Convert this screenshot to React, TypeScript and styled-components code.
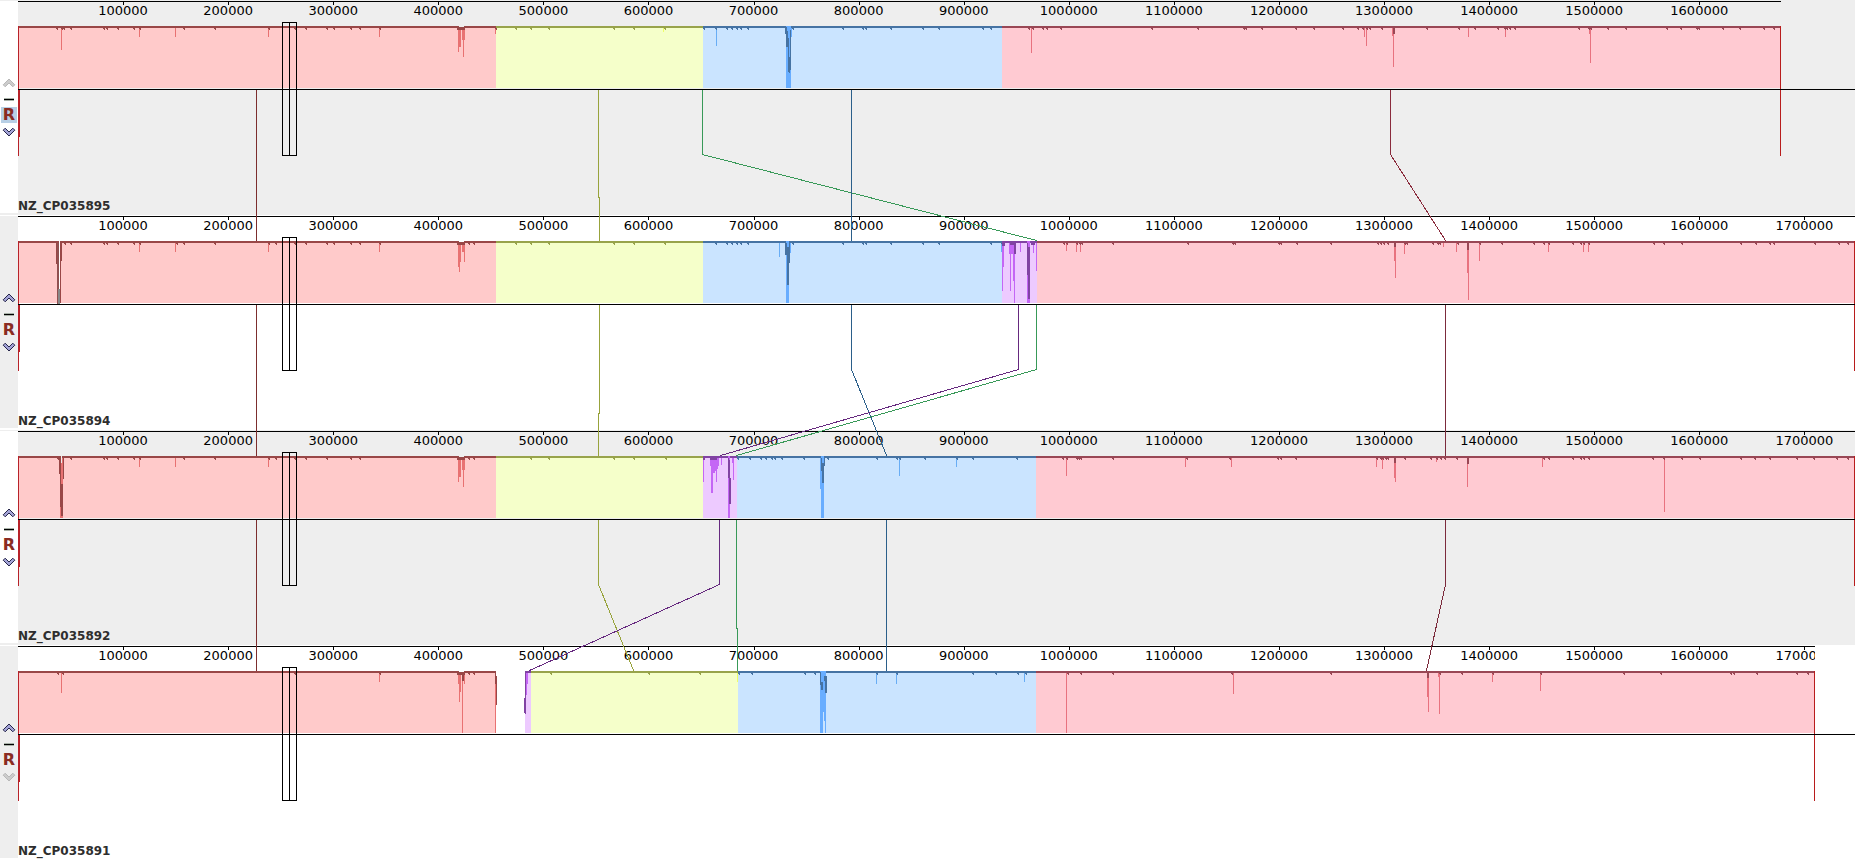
import React from 'react';
import styled, { createGlobalStyle } from 'styled-components';

const GlobalStyle = createGlobalStyle`
  body {
    margin: 0;
    background: #ffffff;
    font-family: "DejaVu Sans", Verdana, sans-serif;
  }
`;

const GUTTER = 18;
const SPAN = 1837;
const GENOME_SPAN = 1748200;
const ROW = 215;
const RULER = 22;
const CHART = 177;

type Hue = 'red' | 'yellow' | 'blue' | 'pink' | 'purple';

const hues: Record<Hue, { fill: string; line: string; low: string }> = {
  red: { fill: '#ffcaca', line: '#994747', low: '#e87272' },
  yellow: { fill: '#f5ffca', line: '#98a34b', low: '#eeff66' },
  blue: { fill: '#cae4ff', line: '#4673a3', low: '#68adf5' },
  pink: { fill: '#ffcad2', line: '#994755', low: '#e8727f' },
  purple: { fill: '#edcaff', line: '#8143a3', low: '#c466f5' },
};

/* [x, width, top, bottom, tone] */
type Bar = [number, number, number, number, string];

interface Genome {
  name: string;
  shaded: boolean;
  end: number;
  blocks: [Hue, number, number][];
  nicks: number[];
  spikes: [number, number, number?][];
  bars: Bar[];
}

const genomes: Genome[] = [
  {
    name: 'NZ_CP035895',
    shaded: true,
    end: 1781,
    blocks: [['red', 18, 496], ['yellow', 496, 703], ['blue', 703, 1002], ['pink', 1002, 1781]],
    nicks: [
      56, 61, 63, 70, 103, 106, 117, 133, 139, 183, 214, 268, 294, 305, 326, 333, 350, 359, 379, 495, 515, 530, 548,
      613, 633, 664, 703, 715, 726, 731, 736, 740, 747, 792, 842, 862, 865, 890, 922, 938, 982, 990, 1028, 1032, 1042,
      1046, 1060, 1151, 1197, 1243, 1245, 1261, 1295, 1313, 1342, 1357, 1362, 1366, 1369, 1381, 1426, 1458, 1474, 1497,
      1504, 1506, 1509, 1514, 1578, 1588, 1590, 1607, 1625, 1666, 1680, 1696, 1698, 1722, 1739, 1763, 1773,
    ],
    spikes: [
      [61, 50], [139, 37], [175, 37], [268, 37], [379, 37], [458, 52], [459, 47, 2], [462, 40, 3], [463, 57], [495, 34],
      [663, 32], [716, 46], [1031, 53], [1364, 37], [1366, 46], [1392, 36], [1393, 67], [1468, 37], [1505, 37],
      [1589, 34], [1590, 63],
    ],
    bars: [
      [457, 8, 28, 30, '#994747'], [459, 5, 26, 27, '#eeeeee'], [1393, 2, 28, 34, '#994755'],
      [786, 5, 26, 88, '#68adff'], [791, 1, 28, 37, '#68adff'], [785, 2, 27, 34, '#4673a3'], [786, 2, 31, 47, '#4673a3'],
      [788, 1, 38, 72, '#4673a3'], [789, 1, 57, 73, '#4673a3'], [790, 1, 30, 70, '#4673a3'],
    ],
  },
  {
    name: 'NZ_CP035894',
    shaded: false,
    end: 1855,
    blocks: [['red', 18, 496], ['yellow', 496, 703], ['blue', 703, 1002], ['purple', 1002, 1037], ['pink', 1037, 1855]],
    nicks: [
      64, 70, 103, 106, 117, 133, 139, 176, 183, 214, 268, 275, 294, 305, 326, 333, 350, 359, 379, 468, 473, 515, 530,
      548, 613, 633, 664, 715, 726, 731, 736, 740, 747, 792, 842, 862, 865, 890, 922, 938, 990, 1001, 1063, 1066, 1076,
      1079, 1081, 1112, 1187, 1232, 1234, 1278, 1280, 1296, 1330, 1377, 1380, 1383, 1387, 1404, 1406, 1432, 1437, 1439,
      1457, 1479, 1501, 1533, 1543, 1548, 1572, 1580, 1583, 1588, 1653, 1663, 1681, 1740, 1755, 1769, 1773, 1814, 1838,
      1847,
    ],
    spikes: [
      [139, 37], [175, 37], [268, 37], [379, 37], [458, 52], [459, 57], [460, 47], [462, 37, 2], [464, 47], [779, 42],
      [1001, 37], [1002, 76], [1003, 52], [1009, 39, 4], [1010, 76], [1013, 66], [1014, 88], [1020, 37], [1033, 38],
      [1036, 56], [1066, 36], [1076, 37], [1080, 37], [1394, 46], [1395, 63], [1404, 39], [1443, 32], [1456, 37],
      [1467, 58], [1468, 85], [1479, 46], [1548, 37], [1583, 37], [1588, 37],
    ],
    bars: [
      [457, 8, 28, 30, '#994747'], [459, 5, 26, 27, '#ffffff'],
      [56, 1, 28, 49, '#994747'], [57, 2, 28, 89, '#8f5050'], [59, 1, 26, 74, '#ffffff'], [58, 2, 74, 89, '#888888'],
      [60, 1, 27, 88, '#994747'], [61, 1, 28, 46, '#994747'],
      [786, 3, 26, 88, '#68adff'], [785, 2, 28, 40, '#4673a3'], [787, 2, 32, 70, '#4673a3'], [789, 1, 28, 48, '#4673a3'],
      [790, 1, 28, 38, '#68adff'],
      [1002, 3, 27, 31, '#8143a3'], [1010, 5, 28, 30, '#8143a3'], [1014, 2, 28, 39, '#8143a3'],
      [1027, 3, 26, 88, '#c466f5'], [1027, 1, 28, 60, '#8143a3'], [1028, 2, 32, 84, '#8143a3'], [1031, 4, 28, 30, '#8143a3'],
      [1394, 2, 28, 32, '#994755'], [1467, 2, 28, 35, '#994755'],
    ],
  },
  {
    name: 'NZ_CP035892',
    shaded: true,
    end: 1855,
    blocks: [['red', 18, 496], ['yellow', 496, 703], ['purple', 703, 737], ['blue', 737, 1036], ['pink', 1036, 1855]],
    nicks: [
      57, 70, 103, 106, 117, 133, 139, 183, 214, 268, 275, 294, 305, 326, 350, 359, 468, 473, 530, 548, 613, 633, 665,
      737, 749, 760, 765, 771, 774, 781, 803, 827, 876, 896, 899, 924, 956, 972, 1016, 1062, 1066, 1076, 1078, 1080, 1112,
      1186, 1229, 1277, 1280, 1295, 1376, 1380, 1382, 1385, 1387, 1404, 1430, 1436, 1440, 1444, 1456, 1543, 1548, 1572,
      1580, 1583, 1588, 1652, 1663, 1681, 1699, 1740, 1754, 1769, 1796, 1813, 1836, 1847,
    ],
    spikes: [
      [139, 37], [175, 37], [268, 37], [458, 52], [459, 47, 2], [462, 40, 3], [463, 57], [703, 52], [710, 36, 9],
      [711, 63, 2], [713, 43, 2], [715, 41], [716, 52], [717, 39], [721, 35], [732, 33], [733, 50], [899, 46], [956, 37],
      [1066, 46], [1185, 37], [1231, 37], [1376, 37], [1382, 39], [1394, 48, 2], [1395, 52], [1436, 32], [1467, 57],
      [1542, 37], [1664, 82],
    ],
    bars: [
      [457, 8, 28, 30, '#994747'], [459, 5, 26, 27, '#eeeeee'],
      [60, 3, 28, 88, '#e87272'], [59, 1, 28, 44, '#994747'], [60, 1, 28, 77, '#994747'], [61, 2, 54, 86, '#994747'],
      [63, 1, 28, 49, '#994747'], [61, 1, 26, 33, '#eeeeee'],
      [703, 2, 28, 30, '#8143a3'], [710, 7, 28, 30, '#8143a3'], [728, 2, 26, 88, '#c466f5'], [729, 1, 30, 74, '#8143a3'],
      [728, 1, 28, 48, '#8143a3'], [730, 1, 48, 74, '#8143a3'],
      [820, 1, 28, 59, '#68adff'], [821, 3, 26, 88, '#68adff'], [821, 1, 28, 41, '#4673a3'], [822, 2, 33, 53, '#4673a3'],
      [824, 1, 28, 36, '#4673a3'], [1394, 2, 28, 33, '#994755'], [1467, 2, 28, 34, '#994755'],
    ],
  },
  {
    name: 'NZ_CP035891',
    shaded: false,
    end: 1815,
    blocks: [['red', 18, 496], ['purple', 525, 531], ['yellow', 531, 738], ['blue', 738, 1036], ['pink', 1036, 1815]],
    nicks: [
      57, 62, 294, 379, 468, 473, 550, 648, 699, 738, 751, 804, 814, 876, 896, 972, 995, 1017, 1025, 1067, 1080, 1112,
      1231, 1330, 1439, 1461, 1492, 1540, 1623, 1660, 1730, 1733, 1756, 1796, 1807,
    ],
    spikes: [
      [61, 48], [379, 37], [458, 39], [459, 57], [460, 47], [462, 88], [464, 39], [495, 88], [527, 39], [526, 50],
      [737, 37], [876, 39], [896, 39], [1024, 37], [1066, 88], [1233, 49], [1427, 52], [1428, 67], [1438, 32],
      [1439, 69], [1492, 37], [1540, 46],
    ],
    bars: [
      [457, 8, 28, 30, '#994747'], [462, 2, 28, 36, '#994747'], [459, 5, 26, 27, '#ffffff'],
      [495, 1, 28, 39, '#994747'], [496, 1, 31, 60, '#994747'], [525, 1, 27, 69, '#8143a3'], [524, 1, 53, 68, '#8143a3'],
      [820, 6, 26, 88, '#68adff'], [823, 1, 67, 88, '#cae4ff'], [824, 1, 76, 88, '#cae4ff'], [820, 1, 27, 40, '#4673a3'],
      [821, 2, 37, 45, '#4673a3'], [824, 2, 31, 36, '#4673a3'], [825, 2, 31, 48, '#4673a3'],
      [1427, 2, 28, 33, '#994755'],
    ],
  },
];

const connectors: { tone: string; points: string }[] = [
  { tone: '#7c2e2e', points: '256,90 256,240' },
  { tone: '#98a33c', points: '598,90 598,196 599,198 599,240' },
  { tone: '#389958', points: '702,90 702,154 1036,240' },
  { tone: '#2b5f8a', points: '851,90 851,240' },
  { tone: '#8a2b3c', points: '1390,90 1390,154 1445,240' },
  { tone: '#7c2e2e', points: '256,305 256,455' },
  { tone: '#98a33c', points: '599,305 599,412 598,414 598,455' },
  { tone: '#2b5f8a', points: '851,305 851,369 886,455' },
  { tone: '#66297f', points: '1018,305 1018,369 720,455' },
  { tone: '#389958', points: '1036,305 1036,369 736,455' },
  { tone: '#7c2b3c', points: '1445,305 1445,455' },
  { tone: '#7c2e2e', points: '256,520 256,670' },
  { tone: '#98a33c', points: '598,520 598,584 633,670' },
  { tone: '#66297f', points: '719,520 719,584 529,670' },
  { tone: '#389958', points: '736,520 736,627 737,629 737,670' },
  { tone: '#2b5f8a', points: '886,520 886,670' },
  { tone: '#7c2b3c', points: '1445,520 1445,584 1426,670' },
];

const Viewer = styled.main`
  position: relative;
  width: 100%;
`;

const Row = styled.section<{ $shaded: boolean }>`
  display: grid;
  grid-template-columns: ${GUTTER}px minmax(0, 1fr);
  background: ${(p) => (p.$shaded ? '#eeeeee' : '#ffffff')};
`;

const Controls = styled.div<{ $shaded: boolean }>`
  display: flex;
  flex-direction: column;
  align-items: flex-start;
  margin: 1px 0 2px;
  padding-top: 74px;
  background: ${(p) => (p.$shaded ? '#ffffff' : '#eeeeee')};
`;

const IconButton = styled.button`
  display: flex;
  align-items: center;
  justify-content: center;
  width: 16px;
  height: 16px;
  margin: 0 0 1px 1px;
  padding: 0;
  border: 0;
  background: transparent;
`;

const HideButton = styled(IconButton)`
  height: 15px;
  margin-bottom: 0;
`;

const ReverseButton = styled(IconButton)<{ $active: boolean }>`
  background: ${(p) => (p.$active ? '#b8cfe5' : 'transparent')};
  color: #8a2b22;
  font: bold 16px/16px "DejaVu Sans", sans-serif;
`;

const Track = styled.div`
  display: flex;
  flex-direction: column;
  min-width: 0;
`;

const RulerSvg = styled.svg<{ $share: number }>`
  display: block;
  width: ${(p) => p.$share}%;
  height: ${RULER}px;
  overflow: hidden;
`;

const RulerText = styled.text`
  font-size: 13px;
  fill: #000000;
  text-anchor: middle;
`;

const ChartSvg = styled.svg`
  display: block;
  width: 100%;
  height: ${CHART}px;
  shape-rendering: crispEdges;
`;

const GenomeName = styled.h2`
  margin: 0;
  height: 16px;
  font-size: 12px;
  line-height: 14px;
  font-weight: bold;
  color: #2e2e2e;
`;

const Overlay = styled.svg`
  position: absolute;
  top: 0;
  left: ${GUTTER}px;
  width: calc(100% - ${GUTTER}px);
  height: 100%;
  pointer-events: none;
  shape-rendering: crispEdges;
`;

const Chevron = ({ down, muted }: { down?: boolean; muted?: boolean }) => (
  <svg width="14" height="10" viewBox="0 0 14 10" aria-hidden="true">
    <path
      d="M7 1 L12.8 6.8 L10.8 8.8 L7 5 L3.2 8.8 L1.2 6.8 Z"
      transform={down ? 'rotate(180 7 5)' : undefined}
      fill={muted ? '#cccccc' : '#a3a3d6'}
      stroke={muted ? '#b8b8b8' : '#26264a'}
    />
  </svg>
);

const Ruler = ({ end }: { end: number }) => {
  const share = (end - GUTTER) / SPAN;
  const length = GENOME_SPAN * share;
  const marks = Array.from({ length: 17 }, (_, i) => (i + 1) * 100000).filter((v) => v < length);
  return (
    <RulerSvg $share={share * 100}>
      <rect x="0" y="1" width="100%" height="1" />
      {marks.map((value) => {
        const at = `${(value / length) * 100}%`;
        return (
          <g key={value}>
            <rect x={at} y="1" width="1" height="4" shapeRendering="crispEdges" />
            <RulerText x={at} y="15">{value}</RulerText>
          </g>
        );
      })}
    </RulerSvg>
  );
};

const Chart = ({ genome }: { genome: Genome }) => {
  const hueAt = (x: number): Hue =>
    (genome.blocks.find(([, from, to]) => x >= from && x < to) ?? genome.blocks[0])[0];
  return (
    <ChartSvg
      viewBox={`${GUTTER} ${RULER} ${SPAN} ${CHART}`}
      preserveAspectRatio="none"
      role="img"
      aria-label={`Conservation profile of ${genome.name}`}
    >
      {genome.blocks.map(([hue, from, to]) => (
        <g key={from}>
          <rect x={from} y={26} width={to - from} height={62} fill={hues[hue].fill} />
          <rect x={from} y={26} width={to - from} height={2} fill={hues[hue].line} />
        </g>
      ))}
      {genome.spikes.map(([x, bottom, width = 1]) => (
        <rect key={`${x}-${bottom}`} x={x} y={28} width={width} height={bottom - 28} fill={hues[hueAt(x)].low} />
      ))}
      {genome.nicks.map((x) => (
        <g key={x} fill={hues[hueAt(x)].line}>
          <rect x={x} y={28} width={2} height={1} />
          <rect x={x + 1} y={29} width={1} height={1} />
        </g>
      ))}
      {genome.bars.map(([x, width, top, bottom, tone]) => (
        <rect key={`${x}-${top}-${bottom}`} x={x} y={top} width={width} height={bottom - top} fill={tone} />
      ))}
      <rect x={18} y={26} width={1} height={130} fill="#b82229" />
      <rect x={19} y={89} width={1} height={48} fill="#b82229" />
      <rect x={genome.end - 1} y={26} width={1} height={130} fill="#b81c1c" />
      <rect x={18} y={89} width={SPAN} height={1} fill="#000000" />
      <rect x={282} y={22} width={15} height={1} />
      <rect x={282} y={155} width={15} height={1} />
      <rect x={282} y={22} width={1} height={134} />
      <rect x={289} y={22} width={1} height={134} />
      <rect x={296} y={22} width={1} height={134} />
    </ChartSvg>
  );
};

export default function App() {
  return (
    <Viewer>
      <GlobalStyle />
      {genomes.map((genome, i) => (
        <Row key={genome.name} $shaded={genome.shaded}>
          <Controls $shaded={genome.shaded}>
            <IconButton aria-label="Move up" disabled={i === 0}>
              <Chevron muted={i === 0} />
            </IconButton>
            <HideButton aria-label="Hide genome">
              <svg width="10" height="3" viewBox="0 0 10 3" aria-hidden="true">
                <rect width="10" height="3" fill="#a9b3a9" />
                <rect y="1" width="10" height="1" fill="#000000" />
              </svg>
            </HideButton>
            <ReverseButton $active={i === 0} aria-pressed={i === 0}>R</ReverseButton>
            <IconButton aria-label="Move down" disabled={i === genomes.length - 1}>
              <Chevron down muted={i === genomes.length - 1} />
            </IconButton>
          </Controls>
          <Track>
            <Ruler end={genome.end} />
            <Chart genome={genome} />
            <GenomeName>{genome.name}</GenomeName>
          </Track>
        </Row>
      ))}
      <Overlay viewBox={`${GUTTER} 0 ${SPAN} ${ROW * genomes.length}`} preserveAspectRatio="none" aria-hidden="true">
        <g transform="translate(0.5 0.5)" fill="none" strokeLinecap="square">
          {connectors.map(({ tone, points }) => (
            <polyline key={points} points={points} stroke={tone} />
          ))}
        </g>
      </Overlay>
    </Viewer>
  );
}
